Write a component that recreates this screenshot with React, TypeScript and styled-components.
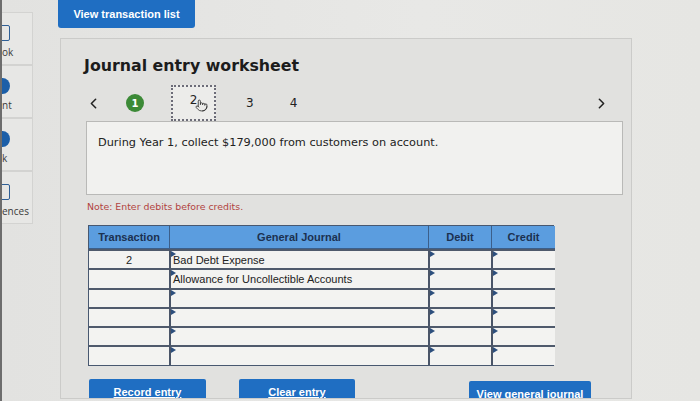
import React from "react";
import styled, { createGlobalStyle } from "styled-components";
import { Pointer, ChevronLeft, ChevronRight } from "lucide-react";

const GlobalStyle = createGlobalStyle`
  html, body {
    margin: 0;
    padding: 0;
    background: #e5e5e3;
    overflow: hidden;
  }
`;

const Page = styled.div`
  display: flex;
  width: 700px;
  height: 401px;
  overflow: hidden;
  background: linear-gradient(90deg, #e2e2e0 0%, #e8e8e6 60%, #e6e6e3 100%);
  border-left: 2px solid #6d6d6d;
  box-sizing: border-box;
`;

const Sidebar = styled.div`
  display: flex;
  flex-direction: column;
  width: 31px;
  padding-top: 12px;
  flex-shrink: 0;
`;

const SideItem = styled.div`
  height: 53px;
  display: flex;
  flex-direction: column;
  justify-content: center;
  border: 1px solid #d3d3d1;
  border-left: none;
  background: #e7e7e5;
  box-sizing: border-box;
  overflow: hidden;
`;

const SideContent = styled.div`
  display: flex;
  flex-direction: column;
  align-items: flex-start;
  gap: 4px;
  font-family: "Open Sans", "Liberation Sans", sans-serif;
  font-size: 10px;
  color: #3a3a3a;
  padding-top: 6px;
`;

const SideIcon = styled.div<{ $round?: boolean }>`
  width: 15px;
  height: 16px;
  margin-left: -7px;
  border-radius: ${(p) => (p.$round ? "50%" : "2px")};
  background: ${(p) => (p.$round ? "#1c5fa8" : "transparent")};
  border: ${(p) => (p.$round ? "none" : "1.5px solid #2e5f96")};
  box-sizing: border-box;
`;

const Main = styled.div`
  display: flex;
  flex-direction: column;
  padding-left: 25px;
`;

const TopButton = styled.div`
  width: 137px;
  height: 28px;
  background: #1f6ec2;
  border-radius: 0 0 3px 3px;
  color: #fff;
  font-family: "Liberation Sans", Arial, sans-serif;
  font-weight: bold;
  font-size: 11px;
  display: flex;
  align-items: center;
  justify-content: center;
`;

const Panel = styled.div`
  margin: 10px 0 0 2px;
  width: 572px;
  height: 361px;
  box-sizing: border-box;
  border: 1px solid #cbcbc9;
  background: #e1e1df;
  padding: 17px 10px 0 23px;
  overflow: hidden;
  display: flex;
  flex-direction: column;
  & > * {
    flex-shrink: 0;
  }
`;

const Title = styled.div`
  font-family: "DejaVu Sans", Verdana, sans-serif;
  font-weight: bold;
  font-size: 15.8px;
  color: #1c1c1c;
  line-height: 20px;
`;

const Pager = styled.div`
  display: flex;
  align-items: center;
  height: 36px;
  margin-top: 9px;
  font-family: "DejaVu Sans", Verdana, sans-serif;
  font-size: 12px;
  color: #222;
`;

const Arrow = styled.span<{ $w: number }>`
  width: ${(p) => p.$w}px;
  display: flex;
  justify-content: center;
  color: #222;
`;

const Done = styled.div`
  width: 18px;
  height: 18px;
  border-radius: 50%;
  background: #3c8a37;
  color: #fff;
  font-weight: bold;
  font-size: 10px;
  display: flex;
  align-items: center;
  justify-content: center;
  margin-left: 24px;
`;

const Current = styled.div`
  width: 45px;
  height: 36px;
  box-sizing: border-box;
  border: 2px dotted #6c6c78;
  background: #ececea;
  display: flex;
  align-items: center;
  justify-content: center;
  padding-bottom: 6px;
  margin-left: 27px;
  position: relative;
`;

const Hand = styled.div`
  position: absolute;
  left: 22px;
  top: 12px;
  color: #333;
`;

const Step = styled.span<{ $gap: number }>`
  margin-left: ${(p) => p.$gap}px;
`;

const Spacer = styled.div`
  flex: 1;
`;

const Description = styled.div`
  width: 537px;
  height: 74px;
  margin-left: 2px;
  box-sizing: border-box;
  border: 1px solid #b9b9b7;
  background: #f1f1ef;
  padding: 14px 11px;
  font-family: "DejaVu Sans", Verdana, sans-serif;
  font-size: 11.3px;
  color: #222;
`;

const Note = styled.div`
  margin: 6px 0 0 3px;
  font-family: "DejaVu Sans", Verdana, sans-serif;
  font-size: 9.4px;
  color: #b2443f;
  line-height: 12px;
`;

const Table = styled.div`
  margin: 12px 0 0 4px;
  width: 466px;
  display: grid;
  grid-template-columns: 80px 259px 63px 64px;
  border: 1px solid #485870;
  box-sizing: border-box;
  font-family: "Liberation Sans", Arial, sans-serif;
`;

const Head = styled.div<{ $first?: boolean }>`
  height: 22px;
  background: #5b9ddf;
  color: #1b3150;
  font-weight: bold;
  font-size: 11px;
  display: flex;
  align-items: center;
  justify-content: center;
  border-left: ${(p) => (p.$first ? "none" : "1px solid #3c5f8a")};
  border-bottom: 1px solid #3c5f8a;
`;

const Cell = styled.div<{ $first?: boolean; $mark?: boolean }>`
  height: 19.3px;
  box-sizing: border-box;
  background: #f3f3f1;
  border-left: ${(p) => (p.$first ? "none" : "2px solid #4a5568")};
  border-top: 2px solid #4f5a6c;
  font-size: 11px;
  color: #222;
  display: flex;
  align-items: center;
  justify-content: ${(p) => (p.$first ? "center" : "flex-start")};
  padding-left: ${(p) => (p.$first ? "0" : "2px")};
  position: relative;
  white-space: nowrap;
  &::before {
    content: "";
    display: ${(p) => (p.$mark ? "block" : "none")};
    position: absolute;
    left: 0;
    top: 0;
    border-top: 3px solid transparent;
    border-bottom: 3px solid transparent;
    border-left: 5px solid #2d4f7d;
  }
`;

const Actions = styled.div`
  display: flex;
  margin-top: 13px;
  margin-left: 5px;
`;

const ActionButton = styled.div<{ $w: number; $gap: number; $down?: number }>`
  width: ${(p) => p.$w}px;
  height: 26px;
  margin-left: ${(p) => p.$gap}px;
  margin-top: ${(p) => p.$down || 0}px;
  background: #1f6ec2;
  border-radius: 2px;
  color: #fff;
  font-family: "Liberation Sans", Arial, sans-serif;
  font-weight: bold;
  font-size: 11px;
  text-decoration: underline;
  display: flex;
  justify-content: center;
  padding-top: 7px;
  box-sizing: border-box;
  flex-shrink: 0;
`;

// only the right-hand ends of these labels are visible in the cropped sidebar
const sideItems = [
  { label: "ok", round: false },
  { label: "nt", round: true },
  { label: "k", round: true },
  { label: "ences", round: false },
];

const rows = [
  { tx: "2", account: "Bad Debt Expense" },
  { tx: "", account: "Allowance for Uncollectible Accounts" },
  { tx: "", account: "" },
  { tx: "", account: "" },
  { tx: "", account: "" },
  { tx: "", account: "" },
];

export default function App() {
  return (
    <>
      <GlobalStyle />
      <Page>
        <Sidebar>
          {sideItems.map((item, i) => (
            <SideItem key={i}>
              <SideContent>
                <SideIcon $round={item.round} />
                <span>{item.label}</span>
              </SideContent>
            </SideItem>
          ))}
        </Sidebar>
        <Main>
          <TopButton>View transaction list</TopButton>
          <Panel>
            <Title>Journal entry worksheet</Title>
            <Pager>
              <Arrow $w={18}>
                <ChevronLeft size={17} strokeWidth={2.2} />
              </Arrow>
              <Done>1</Done>
              <Current>
                2
                <Hand>
                  <Pointer size={13} strokeWidth={1.6} />
                </Hand>
              </Current>
              <Step $gap={30}>3</Step>
              <Step $gap={36}>4</Step>
              <Spacer />
              <Arrow $w={40}>
                <ChevronRight size={17} strokeWidth={2.2} />
              </Arrow>
            </Pager>
            <Description>
              During Year 1, collect $179,000 from customers on account.
            </Description>
            <Note>Note: Enter debits before credits.</Note>
            <Table>
              <Head $first>Transaction</Head>
              <Head>General Journal</Head>
              <Head>Debit</Head>
              <Head>Credit</Head>
              {rows.map((row, i) => (
                <React.Fragment key={i}>
                  <Cell $first>{row.tx}</Cell>
                  <Cell $mark>{row.account}</Cell>
                  <Cell $mark />
                  <Cell $mark />
                </React.Fragment>
              ))}
            </Table>
            <Actions>
              <ActionButton $w={117} $gap={0}>Record entry</ActionButton>
              <ActionButton $w={116} $gap={33}>Clear entry</ActionButton>
              <ActionButton $w={122} $gap={114} $down={2}>
                View general journal
              </ActionButton>
            </Actions>
          </Panel>
        </Main>
      </Page>
    </>
  );
}
